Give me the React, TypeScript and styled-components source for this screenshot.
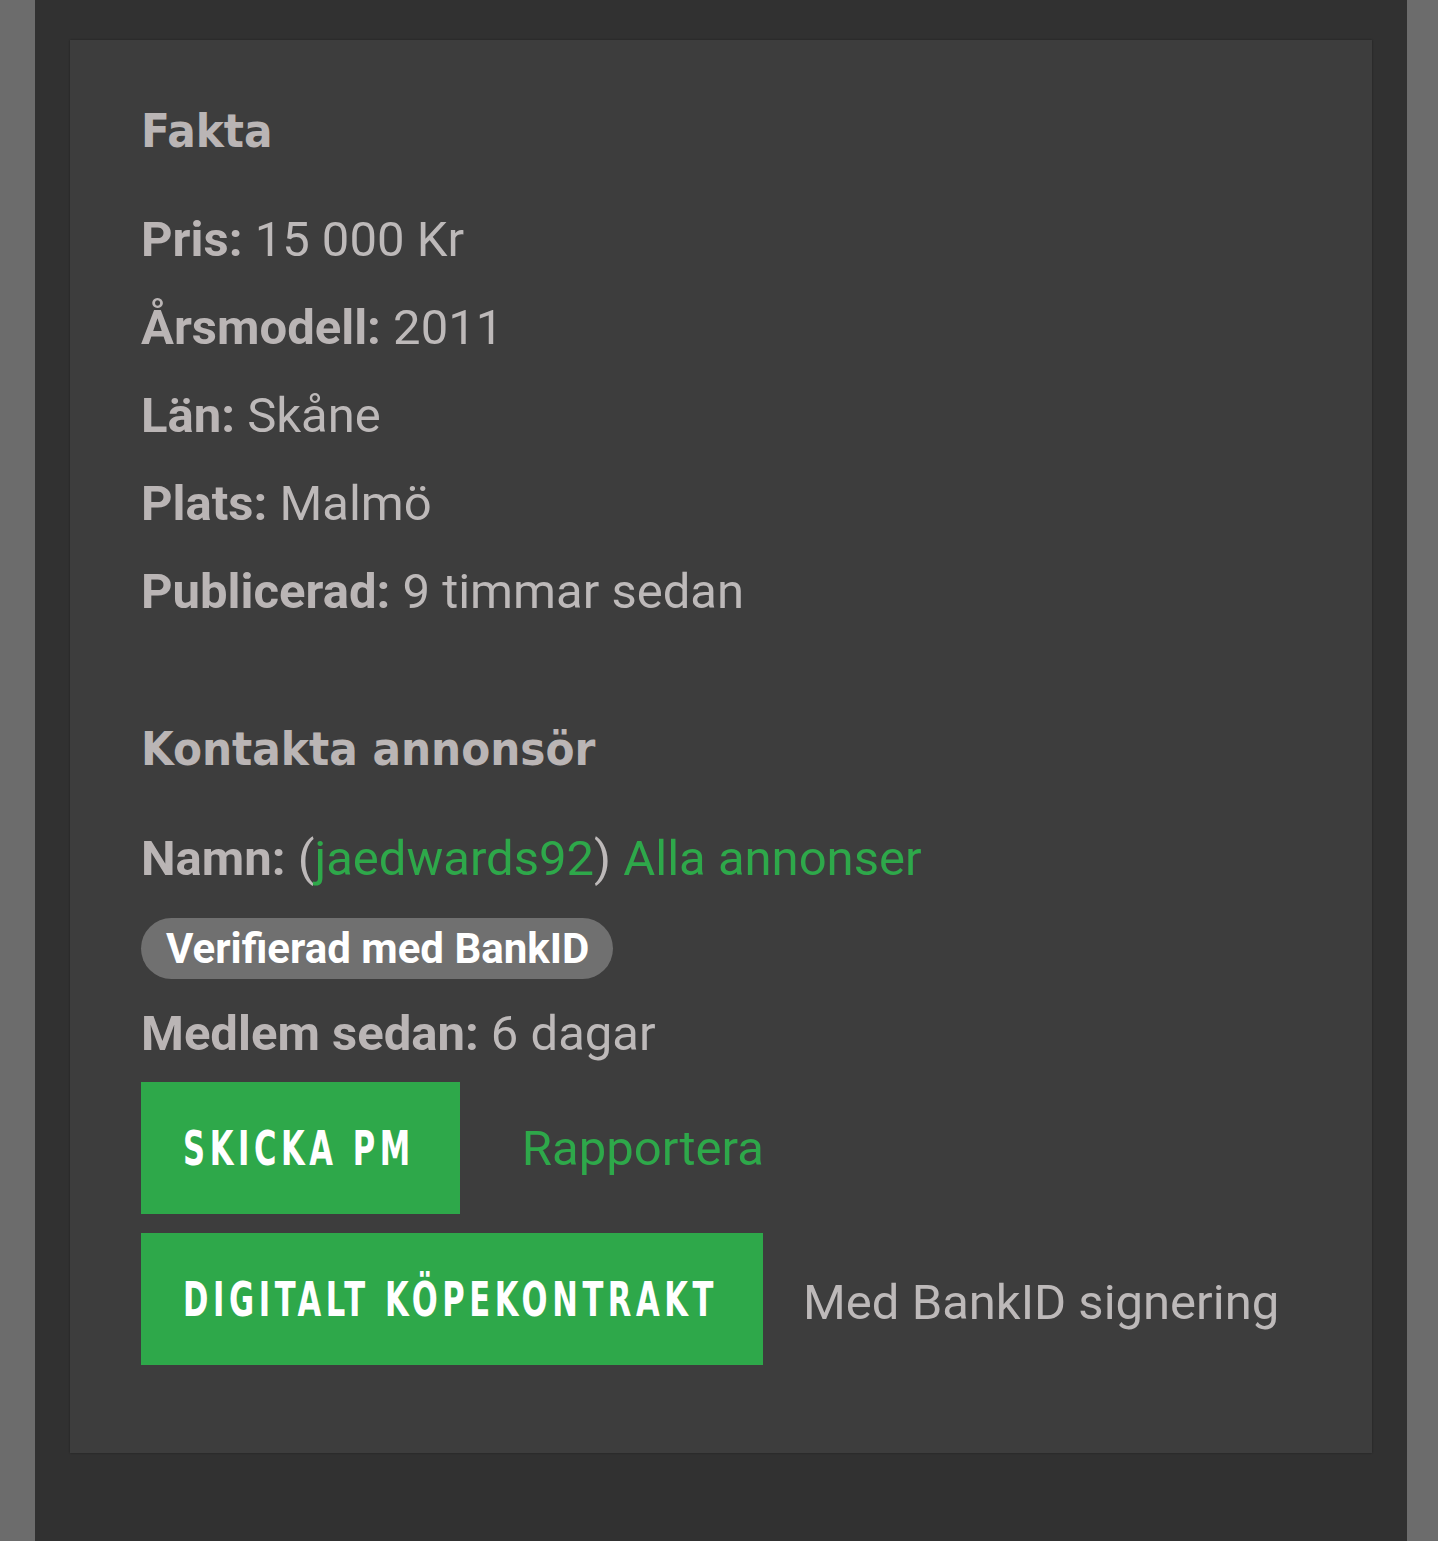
import * as React from 'react';
import styled, { createGlobalStyle } from 'styled-components';

const GlobalStyle = createGlobalStyle`
  html, body {
    margin: 0;
    padding: 0;
    background: #6c6c6c;
  }
  body {
    font-family: Roboto, "Liberation Sans", sans-serif;
  }
`;

const Page = styled.div`
  display: flex;
  min-height: 1541px;
  padding: 0 31px 0 35px;
  box-sizing: border-box;
`;

const Column = styled.main`
  flex: 1;
  background: #313131;
  padding: 40px 35px 90px;
`;

const Card = styled.section`
  background: #3d3d3d;
  box-shadow: 0 0 2px rgba(0, 0, 0, 0.35);
  padding: 61px 71px 88px;
  color: #bdb8b8;
`;

const Heading = styled.h2<{ $spaceAfter: number }>`
  margin: 0 0 ${(p) => p.$spaceAfter}px;
  font-family: "DejaVu Sans Condensed", "DejaVu Sans", sans-serif;
  font-stretch: condensed;
  font-weight: 700;
  font-size: 47px;
  line-height: 60px;
  color: #bab5b5;
`;

const Row = styled.p<{ $spaceAfter?: number }>`
  margin: 0 0 ${(p) => p.$spaceAfter ?? 32}px;
  font-size: 49px;
  line-height: 56px;
  color: #bdb9b9;
  white-space: nowrap;
`;

const Label = styled.strong`
  font-weight: 700;
  color: #bab5b5;
`;

const Link = styled.a`
  color: #2ea84a;
  text-decoration: none;
`;

const Badge = styled.span`
  display: inline-flex;
  align-items: center;
  height: 61px;
  padding: 0 24px 0 25px;
  border-radius: 31px;
  background: #707070;
  color: #ffffff;
  font-weight: 700;
  font-size: 42px;
  margin-bottom: 27px;
`;

const ActionRow = styled.div<{ $gap: number; $spaceAfter?: number }>`
  display: flex;
  align-items: center;
  gap: ${(p) => p.$gap}px;
  margin-bottom: ${(p) => p.$spaceAfter ?? 0}px;
`;

const GreenButton = styled.button`
  height: 132px;
  padding: 0 45px 0 42px;
  border: none;
  background: #2ea84a;
  color: #ffffff;
  cursor: pointer;
`;

const ButtonLabel = styled.span`
  display: inline-block;
  transform: scaleY(1.4);
  font-family: "DejaVu Sans Condensed", "DejaVu Sans", sans-serif;
  font-stretch: condensed;
  font-weight: 700;
  font-size: 34px;
  letter-spacing: 4.6px;
`;

const SideText = styled.span<{ $green?: boolean; $nudge?: number }>`
  font-size: 49px;
  color: ${(p) => (p.$green ? '#2ea84a' : '#bdb9b9')};
  margin-top: ${(p) => p.$nudge ?? 0}px;
`;

const facts: [string, string][] = [
  ['Pris:', '15 000 Kr'],
  ['Årsmodell:', '2011'],
  ['Län:', 'Skåne'],
  ['Plats:', 'Malmö'],
  ['Publicerad:', '9 timmar sedan'],
];

export default function App(): JSX.Element {
  return (
    <>
      <GlobalStyle />
      <Page>
        <Column>
          <Card>
            <Heading $spaceAfter={51}>Fakta</Heading>
            {facts.map(([label, value], i) => (
              <Row key={label} $spaceAfter={i === facts.length - 1 ? 99 : 32}>
                <Label>{label}</Label> {value}
              </Row>
            ))}

            <Heading $spaceAfter={52}>Kontakta annonsör</Heading>
            <Row $spaceAfter={31}>
              <Label>Namn:</Label> (<Link href="#">jaedwards92</Link>){' '}
              <Link href="#">Alla annonser</Link>
            </Row>
            <Badge>Verifierad med BankID</Badge>
            <Row $spaceAfter={20}>
              <Label>Medlem sedan:</Label> 6 dagar
            </Row>

            <ActionRow $gap={62} $spaceAfter={19}>
              <GreenButton>
                <ButtonLabel>SKICKA PM</ButtonLabel>
              </GreenButton>
              <SideText $green>Rapportera</SideText>
            </ActionRow>
            <ActionRow $gap={40}>
              <GreenButton>
                <ButtonLabel>DIGITALT KÖPEKONTRAKT</ButtonLabel>
              </GreenButton>
              <SideText $nudge={6}>Med BankID signering</SideText>
            </ActionRow>
          </Card>
        </Column>
      </Page>
    </>
  );
}
